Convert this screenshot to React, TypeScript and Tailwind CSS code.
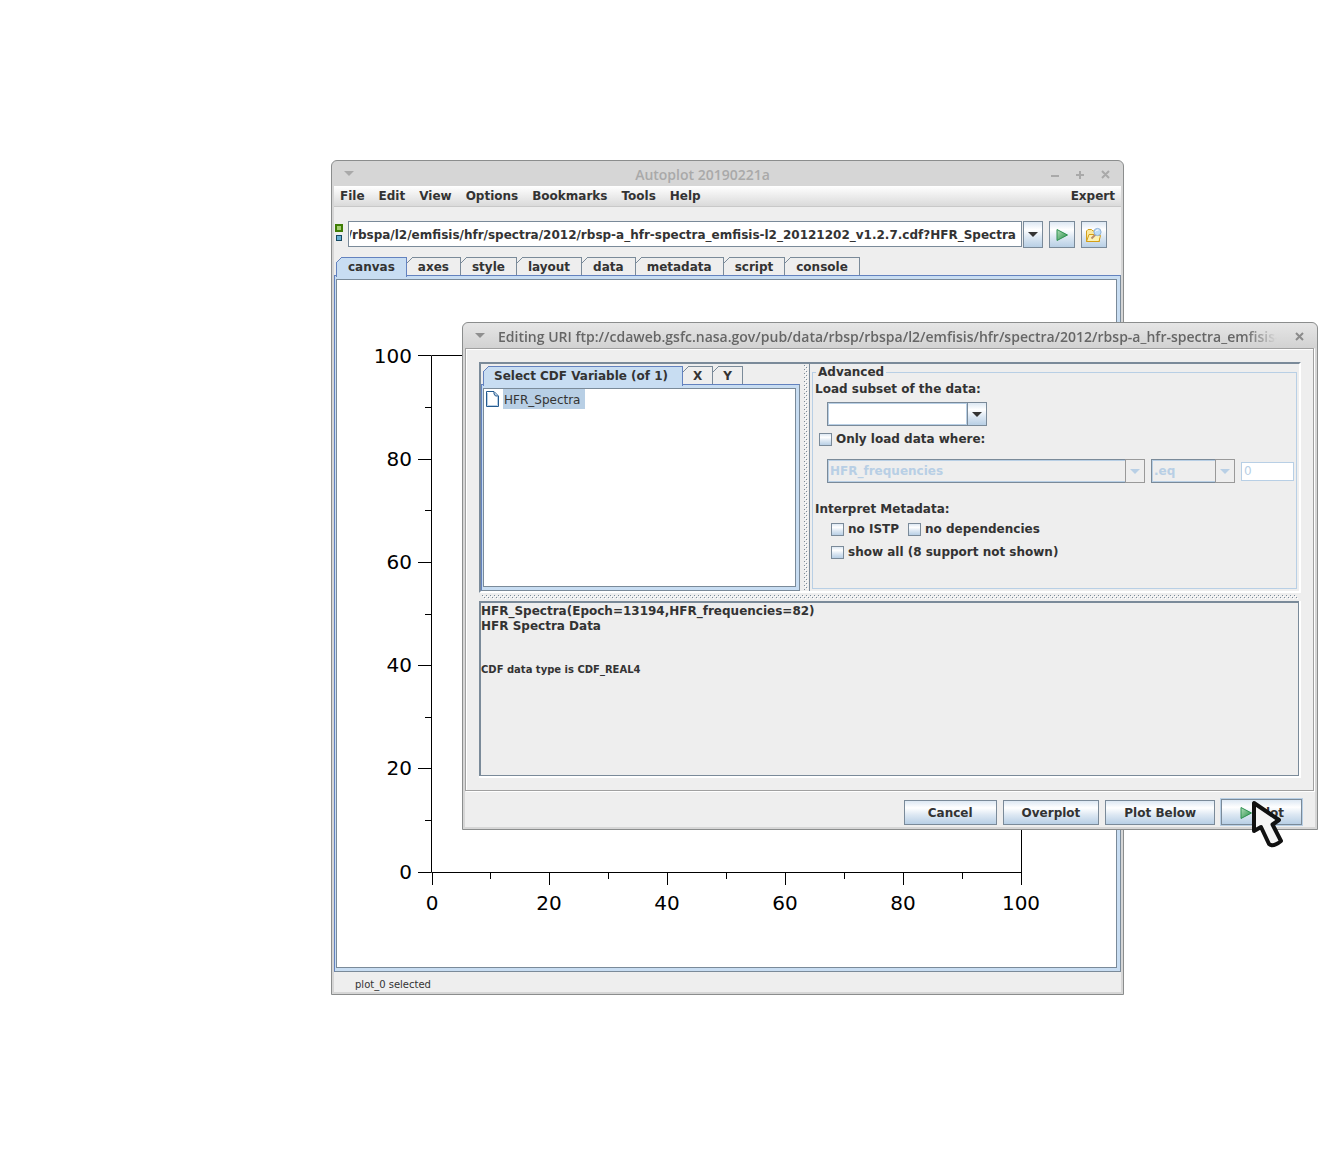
import { useEffect, useRef, type ReactNode } from "react"

const URI =
  "ftp://cdaweb.gsfc.nasa.gov/pub/data/rbsp/rbspa/l2/emfisis/hfr/spectra/2012/rbsp-a_hfr-spectra_emfisis-l2_20121202_v1.2.7.cdf?HFR_Spectra"

const MENUS = ["File", "Edit", "View", "Options", "Bookmarks", "Tools", "Help"]
const TABS = ["canvas", "axes", "style", "layout", "data", "metadata", "script", "console"]

const OCEAN = "bg-[linear-gradient(#dde8f3,#ffffff_30%,#dde8f3_60%,#b8cfe5)]"

function PlayIcon() {
  return (
    <svg width="14" height="14" viewBox="0 0 14 14" aria-hidden="true">
      <defs>
        <linearGradient id="play" x1="0" y1="0" x2="1" y2="1">
          <stop offset="0" stopColor="#b4dfbc" />
          <stop offset="1" stopColor="#1f8a41" />
        </linearGradient>
      </defs>
      <path d="M2 1.5 L12.5 7 L2 12.5 Z" fill="url(#play)" stroke="#2c9150" />
    </svg>
  )
}

function FolderIcon() {
  return (
    <svg width="16" height="16" viewBox="0 0 16 16" aria-hidden="true">
      <path d="M.5 14.5 V4 L2 2.5 H5.5 L7 4 H13.5 V14.5 Z" fill="#fbe9a0" stroke="#d3a11c" />
      <path d="M.5 14.5 L3 7.5 H11.5 L14.5 8.5 L13 14.5 Z" fill="#fdf3b4" stroke="#d39e17" />
      <path d="M5.5 11.5 L9.5 7.5" stroke="#b98d6c" strokeWidth="2" />
      <circle cx="11.5" cy="5" r="3.6" fill="#bcdcf8" stroke="#8fb1d6" />
      <path d="M9.5 4.5 Q10.5 2.7 12.5 3" fill="none" stroke="#ffffff" />
    </svg>
  )
}

function Arrow({ color = "#333333" }: { color?: string }) {
  return (
    <svg width="10" height="5" viewBox="0 0 10 5" aria-hidden="true">
      <path d="M0 0 H10 L5 5 Z" fill={color} />
    </svg>
  )
}

function Tab({ label, selected, pad = "px-[11px]" }: { label: string; selected?: boolean; pad?: string }) {
  const line = selected ? "#6382bf" : "#7a8a99"
  return (
    <button
      role="tab"
      aria-selected={!!selected}
      className={
        selected
          ? "relative z-10 h-5 border-t border-r border-l border-[#6382bf] bg-[#c8ddf2] pb-px leading-[18px] " + pad
          : "relative h-[18px] border-t border-r border-[#7a8a99] pt-px leading-4 " + pad
      }
    >
      <svg
        className={selected ? "absolute -top-px -left-px" : "absolute -top-px left-0"}
        width="6"
        height="6"
        viewBox="0 0 6 6"
        aria-hidden="true"
      >
        <path d="M0 0 H6 L0 6 Z" fill="#eeeeee" />
        <path d="M0 6 L6 0" stroke={line} />
      </svg>
      {label}
    </button>
  )
}

function DisabledCombo({ label, value, className }: { label: string; value: string; className: string }) {
  return (
    <div className={"relative h-6 border border-[#7a8a99] " + className}>
      <select
        disabled
        aria-label={label}
        className="block h-full w-full appearance-none border border-[#b8cfe5] bg-[#eeeeee] pl-px font-bold text-[#b8cfe5] opacity-100"
      >
        <option>{value}</option>
      </select>
      <span className="pointer-events-none absolute -top-px -right-px flex h-6 w-5 items-center justify-center border border-[#999999] bg-[#eeeeee]">
        <Arrow color="#b8cfe5" />
      </span>
    </div>
  )
}

function Check({ children }: { children: ReactNode }) {
  return (
    <label className="flex items-center gap-1">
      <input
        type="checkbox"
        className="size-[13px] shrink-0 appearance-none border border-[#7a8a99] bg-[linear-gradient(#dde8f3,#ffffff_30%,#dde8f3_60%,#b8cfe5)]"
      />
      {children}
    </label>
  )
}

function Dots({ id, className }: { id: string; className: string }) {
  return (
    <svg className={className} aria-hidden="true">
      <pattern id={id} width="4" height="4" patternUnits="userSpaceOnUse">
        <path d="M0 0 h1 v1 h-1 z M2 2 h1 v1 h-1 z" fill="#7a8a99" />
        <path d="M1 1 h1 v1 h-1 z M3 3 h1 v1 h-1 z" fill="#ffffff" />
      </pattern>
      <rect width="100%" height="100%" fill={"url(#" + id + ")"} />
    </svg>
  )
}

function Plot() {
  const steps = [0, 10, 20, 30, 40, 50, 60, 70, 80, 90, 100]
  const px = (v: number) => Math.floor(95 + v * 5.89) + 0.5
  const py = (v: number) => Math.floor(592 - v * 5.16) + 0.5
  return (
    <svg className="block h-[687px] w-full font-normal" fontSize="20" role="img" aria-label="Empty plot">
      <path d="M94.5 75.5 H684.5 V592.5 H94.5 Z" fill="none" stroke="#000000" />
      {steps.map((v) => (
        <g key={v}>
          <path
            d={`M${px(v)} 592 v${v % 20 ? 7 : 13} M94 ${v === 100 ? 75.5 : py(v)} h-${v % 20 ? 6 : 13}`}
            stroke="#000000"
          />
          {v % 20 === 0 && (
            <>
              <text x={px(v) - 0.5} y="630" textAnchor="middle" fill="#000000">
                {v}
              </text>
              <text x="75" y={py(v) + 6.5} textAnchor="end" fill="#000000">
                {v}
              </text>
            </>
          )}
        </g>
      ))}
    </svg>
  )
}

function MainWindow() {
  const uri = useRef<HTMLInputElement>(null)

  // keep the end of the address in view
  useEffect(() => {
    if (uri.current) uri.current.scrollLeft = uri.current.scrollWidth
  }, [])

  return (
    <section className="absolute top-40 right-[194px] left-[331px] rounded-t-md border border-[#8b8d8d] bg-[#d6d6d6] px-0.5 pb-0.5">
      <header className="flex h-[25px] items-center px-2.5 font-['Open_Sans'] text-[14px] font-semibold text-[#a9a9a9]">
        <Arrow color="#a9a9a9" />
        <h1 className="flex-1 pt-0.5 text-center">Autoplot 20190221a</h1>
        <svg width="60" height="12" viewBox="0 0 60 12" stroke="#a9a9a9" strokeWidth="2" aria-hidden="true">
          <path d="M0 8 H8 M25 7 H33 M29 3 V11 M51 3 L58 10 M58 3 L51 10" />
        </svg>
      </header>

      <div className="bg-[#eeeeee]">
        <nav className="flex h-[21px] items-center justify-between border-b border-[#c8c8c8] bg-linear-to-b from-white to-[#dadada] px-1.5">
          <div className="flex gap-3.5">
            {MENUS.map((m) => (
              <button key={m}>{m}</button>
            ))}
          </div>
          <button>Expert</button>
        </nav>

        <div className="flex pt-3.5 pr-3.5 pb-[9px]">
          <svg className="mt-0.5" width="14" height="20" viewBox="0 0 14 20" aria-hidden="true">
            <rect x="2" y="2" width="6" height="6" fill="#a5cf72" stroke="#3f7d05" strokeWidth="2" />
            <rect x="2.5" y="12.5" width="5" height="5" fill="#67afd3" stroke="#174a63" />
          </svg>
          <input
            ref={uri}
            aria-label="Data address"
            defaultValue={URI}
            className="h-[26px] min-w-0 flex-1 border border-[#7a8a99] bg-white pt-0.5 pr-[5px] pl-px"
          />
          <button
            aria-label="Recent addresses"
            className={"ml-px flex h-[27px] w-5 items-center justify-center border border-[#7a8a99] " + OCEAN}
          >
            <Arrow />
          </button>
          <button
            aria-label="Plot"
            className={"ml-1.5 flex h-[27px] w-[26px] items-center justify-center border border-[#7a8a99] " + OCEAN}
          >
            <PlayIcon />
          </button>
          <button
            aria-label="Browse"
            className={"ml-1.5 flex h-[27px] w-[26px] items-center justify-center border border-[#7a8a99] " + OCEAN}
          >
            <FolderIcon />
          </button>
        </div>

        <div role="tablist" className="flex h-[18px] items-start pl-0.5">
          {TABS.map((t) => (
            <Tab key={t} label={t} selected={t === "canvas"} />
          ))}
        </div>
        <div className="border border-[#6382bf] border-r-[#7a8a99] border-b-[#7a8a99] bg-[#c8ddf2] pt-[3px] pr-[3px] pb-[3px] pl-px">
          <div className="border border-[#7a8a99] bg-white">
            <Plot />
          </div>
        </div>
        <footer className="flex h-5 items-center pt-1 pl-[21px] text-[10px] font-normal">plot_0 selected</footer>
      </div>
    </section>
  )
}

function VariablePane() {
  return (
    <div className="flex w-[319px] flex-col pt-0.5">
      <div role="tablist" className="flex h-[18px] items-start pl-0.5">
        <Tab label="Select CDF Variable (of 1)" selected pad="pr-3.5 pl-2.5" />
        <Tab label="X" pad="px-2.5" />
        <Tab label="Y" pad="px-2.5" />
      </div>
      <div className="flex flex-1 flex-col border border-[#6382bf] border-r-[#7a8a99] border-b-[#7a8a99] bg-[#c8ddf2] pt-[3px] pr-[3px] pb-[3px] pl-px">
        <ul className="flex-1 border border-[#7a8a99] bg-white font-normal">
          <li className="flex h-5 items-center gap-1 pl-px">
            <svg width="14" height="16" viewBox="0 0 14 16" aria-hidden="true">
              <path d="M1.5 .5 H9 L13.5 5 V15.5 H1.5 Z" fill="#ffffff" stroke="#245a8f" />
              <path d="M2.5 2 V14.5 H12.5 V6" fill="none" stroke="#b8cfe5" />
              <path d="M9 1 V3 L10.5 5 H13" fill="#b8cfe5" stroke="#245a8f" />
            </svg>
            <span className="h-5 bg-[#b8cfe5] pt-px pr-[5px] pl-px leading-5">HFR_Spectra</span>
          </li>
        </ul>
      </div>
    </div>
  )
}

function AdvancedPane() {
  return (
    <fieldset className="mx-0.5 mb-0.5 flex-1 border border-[#b8cfe5] px-0.5">
      <legend className="ml-px px-0.5 leading-4">Advanced</legend>
      <label htmlFor="subset" className="block leading-[18px]">
        Load subset of the data:
      </label>
      <div className="mt-1 ml-3 flex h-6 w-40 border border-[#7a8a99]">
        <input id="subset" className="min-w-0 flex-1 border border-[#b8cfe5] bg-white" />
        <button
          aria-label="Subset choices"
          className={"flex w-[19px] items-center justify-center border-l border-[#7a8a99] " + OCEAN}
        >
          <Arrow />
        </button>
      </div>
      <div className="mt-1 ml-1">
        <Check>Only load data where:</Check>
      </div>
      <div className="mt-[11px] ml-3 flex items-center gap-1.5">
        <DisabledCombo label="Variable" value="HFR_frequencies" className="flex-1" />
        <DisabledCombo label="Comparison" value=".eq" className="w-[84px]" />
        <input
          disabled
          aria-label="Value"
          defaultValue="0"
          className="h-[19px] w-[53px] border border-[#b8cfe5] bg-white px-0.5 font-normal text-[#b8cfe5]"
        />
      </div>
      <p className="mt-[17px] leading-[18px]">Interpret Metadata:</p>
      <div className="mt-0.5 ml-4 flex flex-col gap-[5px]">
        <div className="flex gap-[9px]">
          <Check>no ISTP</Check>
          <Check>no dependencies</Check>
        </div>
        <Check>show all (8 support not shown)</Check>
      </div>
    </fieldset>
  )
}

function EditDialog() {
  return (
    <section
      role="dialog"
      aria-labelledby="dialog-title"
      className="absolute top-[322px] right-0 left-[462px] rounded-t-md border border-[#8b8d8d] bg-[#d6d6d6] px-0.5 pb-0.5"
    >
      <header className="-mx-0.5 flex h-[25px] items-center rounded-t-md bg-linear-to-b from-[#e6e6e6] to-[#d2d2d2] px-3 font-['Open_Sans'] text-[14px] font-semibold text-[#666666]">
        <Arrow color="#8f8f8f" />
        <h2
          id="dialog-title"
          className="ml-[13px] min-w-0 flex-1 overflow-hidden mask-[linear-gradient(to_left,transparent,black_32px)] pt-0.5 whitespace-nowrap"
        >
          Editing URI {URI}
        </h2>
        <svg className="ml-4" width="12" height="12" viewBox="0 0 12 12" aria-hidden="true">
          <path d="M3 3 L10 10 M10 3 L3 10" stroke="#8b8b8b" strokeWidth="2" />
        </svg>
      </header>

      <div className="bg-[#eeeeee]">
        <div className="mr-px border border-[#a0a0a0] pt-[13px] pr-[11px] pb-3 pl-3 shadow-[1px_1px_0_#ffffff,inset_1px_1px_0_#ffffff]">
          <div className="mx-px flex border-t-2 border-r-2 border-b-2 border-l-2 border-t-[#7a8a99] border-r-white border-b-white border-l-[#7a8a99]">
            <VariablePane />
            <Dots id="dots-v" className="my-px ml-1 mr-px h-[225px] w-1 self-center" />
            <div className="flex flex-1 border-l border-[#7a8a99]">
              <AdvancedPane />
            </div>
          </div>
          <Dots id="dots-h" className="mx-1 my-0.5 block h-1 w-[calc(100%-8px)]" />
          <div className="mx-px border-r-2 border-b-2 border-white">
            <div className="h-[175px] border-t-2 border-r border-b border-l-2 border-[#7a8a99] pt-px leading-[15px]">
              <p>HFR_Spectra(Epoch=13194,HFR_frequencies=82)</p>
              <p>HFR Spectra Data</p>
              <p className="mt-7 text-[10px]">CDF data type is CDF_REAL4</p>
            </div>
          </div>
        </div>

        <div className="flex items-center justify-end gap-1.5 pt-2 pr-[13px] pb-0.5">
          <button className={"h-[25px] border border-[#7a8a99] px-[23px] pt-px " + OCEAN}>Cancel</button>
          <button className={"h-[25px] border border-[#7a8a99] px-[18px] pt-px " + OCEAN}>Overplot</button>
          <button className={"h-[25px] border border-[#7a8a99] px-[18px] pt-px " + OCEAN}>Plot Below</button>
          <button
            className={
              "flex h-[26px] items-center gap-1 border border-[#7a8a99] px-[17px] pt-px outline outline-[#b8cfe5] " +
              OCEAN
            }
          >
            <PlayIcon />
            Plot
          </button>
        </div>
      </div>
    </section>
  )
}

export default function App() {
  return (
    <main className="relative min-h-screen overflow-hidden bg-white font-['DejaVu_Sans',sans-serif] text-[12px] font-bold text-[#333333]">
      <MainWindow />
      <EditDialog />
      <svg className="absolute top-[800px] right-[33px]" width="34" height="50" viewBox="0 0 34 50" aria-hidden="true">
        <path
          d="M3 3 V31 L10 27 L18 44 Q22 47.5 30 41 L21.5 24.5 L28 20 Z"
          fill="#f6f6f6"
          stroke="#111111"
          strokeWidth="4"
          strokeLinejoin="round"
        />
      </svg>
    </main>
  )
}
